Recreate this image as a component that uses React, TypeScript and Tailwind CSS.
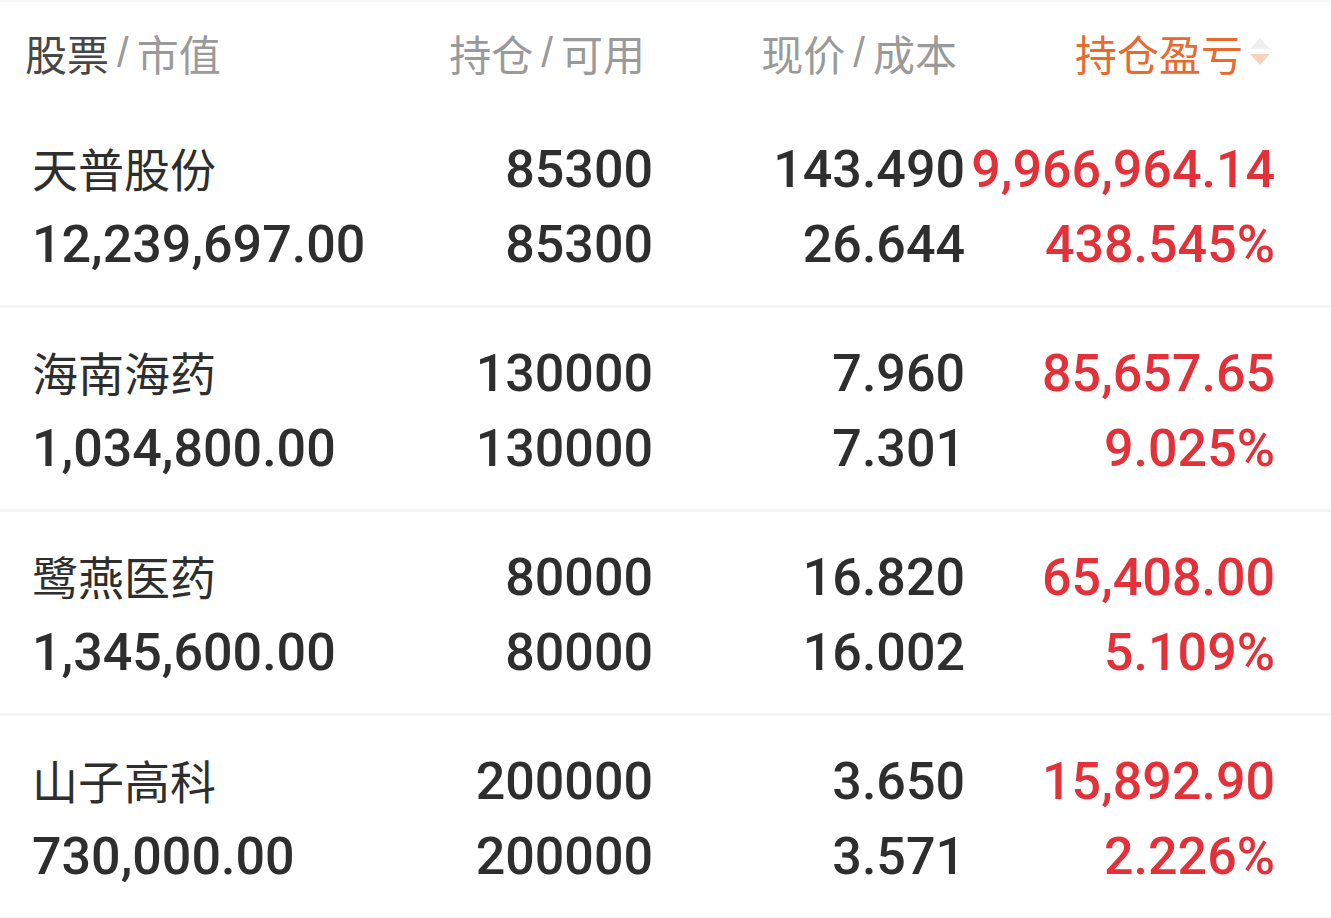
import React from 'react';

interface Holding {
  name: string;
  value: string;
  qty: string;
  avail: string;
  price: string;
  cost: string;
  pnl: string;
  pct: string;
}

const holdings: Holding[] = [
  { name: '天普股份', value: '12,239,697.00', qty: '85300', avail: '85300', price: '143.490', cost: '26.644', pnl: '9,966,964.14', pct: '438.545%' },
  { name: '海南海药', value: '1,034,800.00', qty: '130000', avail: '130000', price: '7.960', cost: '7.301', pnl: '85,657.65', pct: '9.025%' },
  { name: '鹭燕医药', value: '1,345,600.00', qty: '80000', avail: '80000', price: '16.820', cost: '16.002', pnl: '65,408.00', pct: '5.109%' },
  { name: '山子高科', value: '730,000.00', qty: '200000', avail: '200000', price: '3.650', cost: '3.571', pnl: '15,892.90', pct: '2.226%' },
];

const cjk = "font-['Noto_Sans_CJK_SC',sans-serif]";
const num = "font-['Roboto','Liberation_Sans',sans-serif] font-medium text-[52px]";

const SortIcon: React.FC = () => (
  <svg width="30" height="40" viewBox="0 0 30 40" className="ml-[2px]">
    <path d="M15 6 L25 17 L5 17 Z" fill="#efefef" />
    <path d="M5 22 L25 22 L15 33 Z" fill="#f9d2bd" />
  </svg>
);

const Slash: React.FC = () => (
  <span className="font-['Liberation_Sans',sans-serif] text-[#9a9a9a] mx-[8px] font-light">/</span>
);

const Row: React.FC<{ h: Holding }> = ({ h }) => (
  <div className="flex h-[204px] pt-[28px] pl-[32px] border-b-[3px] border-[#f4f4f4] leading-[75px] text-[#2e2e2e]">
    <div className="w-[321px] flex flex-col whitespace-nowrap">
      <span className={`${cjk} text-[46px] -mt-[2px] mb-[2px]`}>{h.name}</span>
      <span className={num}>{h.value}</span>
    </div>
    <div className="w-[300px] flex flex-col items-end whitespace-nowrap">
      <span className={num}>{h.qty}</span>
      <span className={num}>{h.avail}</span>
    </div>
    <div className="w-[312px] flex flex-col items-end whitespace-nowrap">
      <span className={num}>{h.price}</span>
      <span className={num}>{h.cost}</span>
    </div>
    <div className="w-[310px] flex flex-col items-end whitespace-nowrap text-[#e3313a]">
      <span className={num}>{h.pnl}</span>
      <span className={num}>{h.pct}</span>
    </div>
  </div>
);

export default function App() {
  return (
    <div className="w-[1331px] h-[918px] bg-white overflow-hidden border-t-[2px] border-[#f6f6f6]">
      <div className={`flex items-center h-[102px] pb-[2px] pl-[25px] text-[42px] ${cjk} whitespace-nowrap`}>
        <div className="w-[320px] flex items-center">
          <span className="text-[#474747]">股票</span>
          <Slash />
          <span className="text-[#9a9a9a]">市值</span>
        </div>
        <div className="w-[300px] flex items-center justify-end text-[#9a9a9a]">
          持仓<Slash />可用
        </div>
        <div className="w-[312px] flex items-center justify-end text-[#9a9a9a]">
          现价<Slash />成本
        </div>
        <div className="w-[318px] flex items-center justify-end text-[#e86a2c]">
          持仓盈亏
          <SortIcon />
        </div>
      </div>
      {holdings.map((h) => (
        <Row key={h.name} h={h} />
      ))}
    </div>
  );
}
